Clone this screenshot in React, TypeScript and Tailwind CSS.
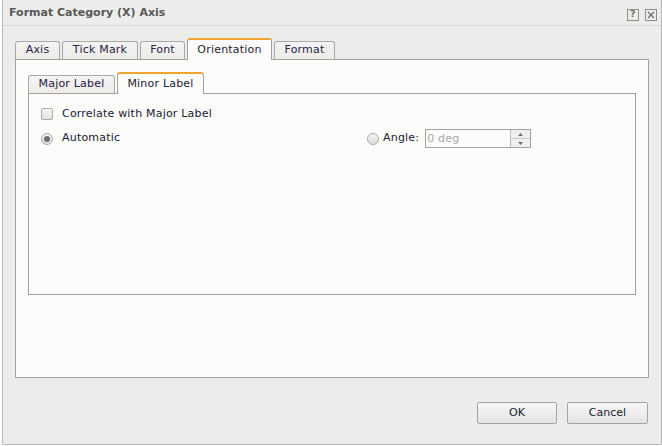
import React from 'react';

const font = { fontFamily: '"DejaVu Sans", Verdana, sans-serif' };

const outerTabs = ['Axis', 'Tick Mark', 'Font', 'Orientation', 'Format'];
const innerTabs = ['Major Label', 'Minor Label'];

function Tab({ label, active, w }: { label: string; active: boolean; w: string }) {
  if (active) {
    return (
      <div
        className={`${w} h-[22px] -mb-px relative z-10 flex items-center justify-center border border-b-0 border-[#9fa19f] border-t-2 border-t-[#f0a531] rounded-t-[3px] bg-[#fcfcfb] text-[#222237]`}
      >
        {label}
      </div>
    );
  }
  return (
    <div
      className={`${w} h-[18px] flex items-center justify-center border border-b-0 border-[#a7aaa8] rounded-t-[3px] bg-gradient-to-b from-[#f3f4f3] via-[#eef0ef] to-[#f2ebe6] text-[#2a2044]`}
    >
      {label}
    </div>
  );
}

export default function App() {
  return (
    <div className="w-[662px] h-[446px] bg-white text-[11px] tracking-[0.2px]" style={font}>
      <div className="ml-[2px] w-[660px] h-[445px] bg-[#ecedeb] border-x border-b border-[#b7b9b7] rounded-b-[2px] flex flex-col">
        {/* Title bar */}
        <div className="h-[26px] border-b border-[#d7d9d7] flex items-center pl-[6px] pr-[4px]">
          <span className="font-bold text-[11px] tracking-normal text-[#575957] mt-[1px]">Format Category (X) Axis</span>
          <div className="ml-auto flex items-center gap-[6px] mt-[4px]">
            <div className="w-[12px] h-[12px] border border-[#8e908e] flex items-center justify-center text-[9px] font-bold text-[#6a6c6a] leading-none">?</div>
            <div className="w-[12px] h-[12px] border border-[#8e908e] flex items-center justify-center">
              <svg width="8" height="8" viewBox="0 0 8 8">
                <path d="M1 1L7 7M7 1L1 7" stroke="#6a6c6a" strokeWidth="1.2" />
              </svg>
            </div>
          </div>
        </div>

        {/* Body */}
        <div className="pl-[12px] pt-[11px]">
          <div className="flex items-end gap-[2px] h-[22px]">
            {outerTabs.map((t, i) => (
              <Tab
                key={t}
                label={t}
                active={t === 'Orientation'}
                w={['w-[45px]', 'w-[76px]', 'w-[45px]', 'w-[85px]', 'w-[61px]'][i]}
              />
            ))}
          </div>
          <div className="w-[634px] h-[319px] border border-[#9fa19f] bg-[#fcfcfb] pl-[12px] pt-[10px]">
            <div className="flex items-end gap-[2px] h-[23px]">
              {innerTabs.map((t, i) => (
                <Tab key={t} label={t} active={t === 'Minor Label'} w={['w-[87px]', 'w-[87px]'][i]} />
              ))}
            </div>
            <div className="w-[608px] h-[202px] border border-[#9fa19f] bg-[#fcfcfb] pl-[12px] pt-[12px] text-[#202030]">
              <div className="flex items-center h-[16px] gap-[9px]">
                <div className="w-[12px] h-[12px] rounded-[2px] border border-[#a9aba9] bg-gradient-to-b from-[#f7f7f7] to-[#dfe0df]" />
                <span>Correlate with Major Label</span>
              </div>
              <div className="flex items-center mt-[7px]">
                <div className="w-[326px] flex items-center gap-[9px]">
                  <div className="w-[12px] h-[12px] rounded-full border border-[#a9aba9] bg-gradient-to-b from-[#f4f4f4] to-[#dcdddc] flex items-center justify-center">
                    <div className="w-[6px] h-[6px] rounded-full bg-[#6d6f6d]" />
                  </div>
                  <span>Automatic</span>
                </div>
                <div className="flex items-center">
                  <div className="w-[12px] h-[12px] rounded-full border border-[#a9aba9] bg-gradient-to-b from-[#f4f4f4] to-[#dcdddc]" />
                  <span className="ml-[4px]">Angle:</span>
                  <div className="ml-[6px] w-[106px] h-[19px] border border-[#a3a5a3] bg-[#fcfcfb] flex">
                    <span className="flex-1 pl-[1px] text-[#a6a8a6] leading-[17px]">0 deg</span>
                    <div className="w-[20px] border-l border-[#b9bbb9] flex flex-col bg-[#eeefee]">
                      <div className="flex-1 flex items-center justify-center border-b border-[#c8cac8]">
                        <svg width="5" height="3" viewBox="0 0 5 3"><path d="M0 3L2.5 0L5 3Z" fill="#6f716f" /></svg>
                      </div>
                      <div className="flex-1 flex items-center justify-center">
                        <svg width="5" height="3" viewBox="0 0 5 3"><path d="M0 0L2.5 3L5 0Z" fill="#6f716f" /></svg>
                      </div>
                    </div>
                  </div>
                </div>
              </div>
            </div>
          </div>
        </div>

        {/* Buttons */}
        <div className="flex justify-end gap-[10px] pr-[13px] mt-[24px]">
          <button className="w-[80px] h-[22px] border border-[#a3a5a3] rounded-[2px] bg-gradient-to-b from-[#f7f7f7] to-[#e3e4e3] text-[11px] tracking-normal text-[#202030]">
            OK
          </button>
          <button className="w-[81px] h-[22px] border border-[#a3a5a3] rounded-[2px] bg-gradient-to-b from-[#f7f7f7] to-[#e3e4e3] text-[11px] tracking-normal text-[#202030]">
            Cancel
          </button>
        </div>
      </div>
    </div>
  );
}
